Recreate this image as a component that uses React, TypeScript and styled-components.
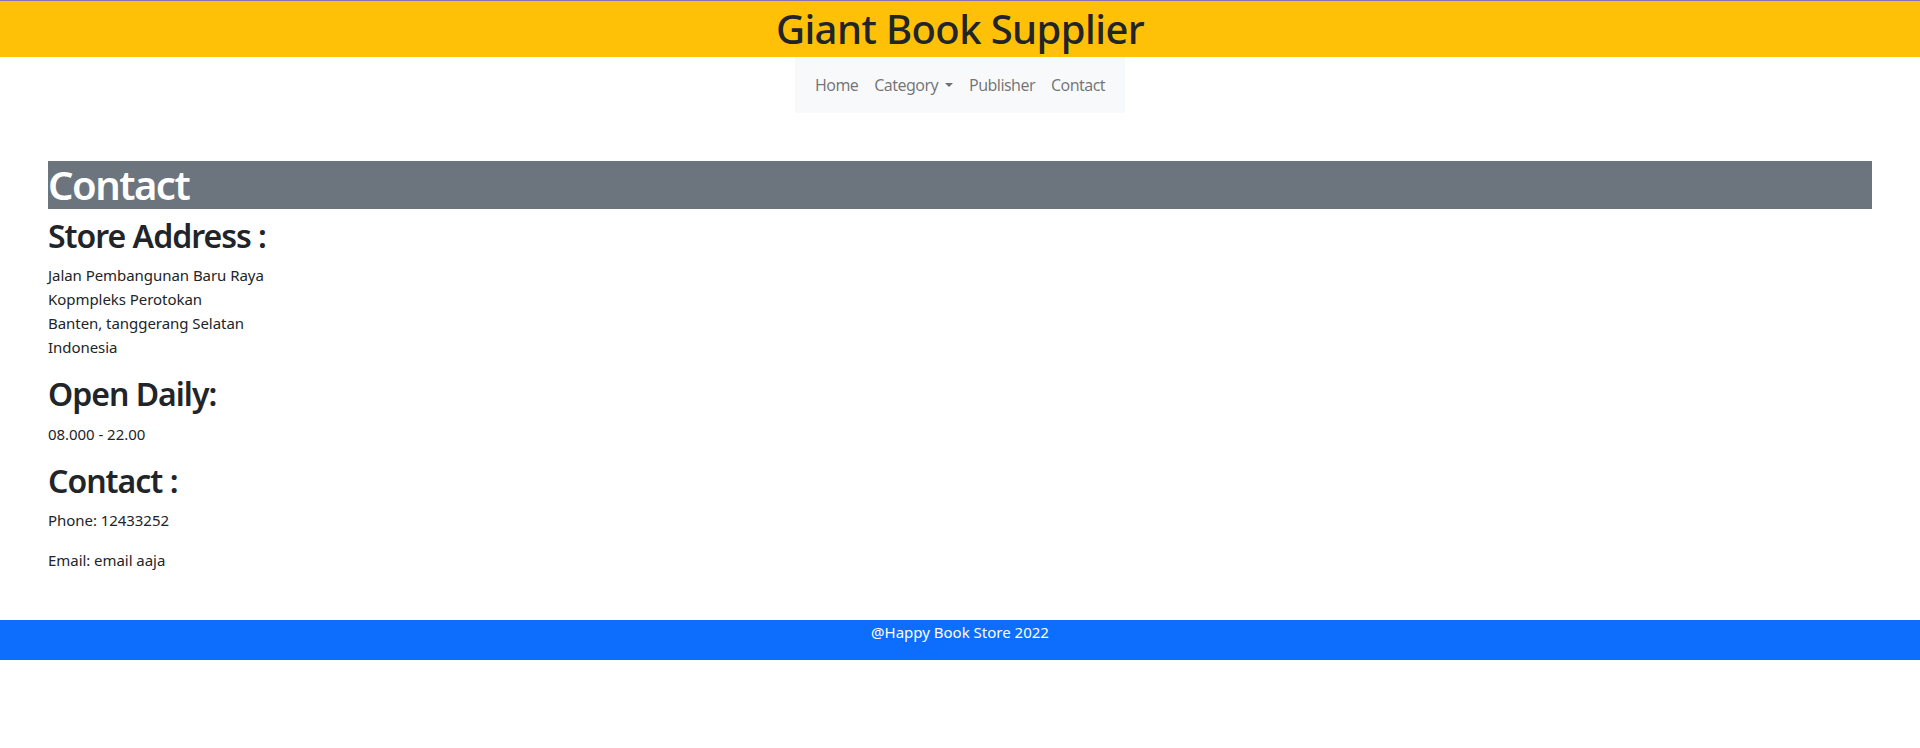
import React from "react";
import styled, { createGlobalStyle } from "styled-components";

const Global = createGlobalStyle`
  *, *::before, *::after { box-sizing: border-box; }
  html, body { margin: 0; padding: 0; background: #fff; }
  body {
    font-family: "Noto Sans", "Open Sans", sans-serif;
    font-size: 16px;
    line-height: 1.5;
    color: #212529;
    border-top: 1px solid #8b71c4;
  }
`;

const Header = styled.h1`
  margin: 0;
  padding: 4px 0;
  background: #ffc107;
  text-align: center;
  font-size: 40px;
  font-weight: 500;
  line-height: 1.2;
  color: #212529;
  letter-spacing: -0.6px;
`;

const NavWrap = styled.div`
  display: flex;
  justify-content: center;
`;

const Nav = styled.nav`
  display: flex;
  align-items: center;
  background: #f8f9fa;
  padding: 8px 12px;
`;

const NavLink = styled.a`
  display: flex;
  align-items: center;
  padding: 8px;
  color: rgba(0, 0, 0, 0.55);
  text-decoration: none;
  font-size: 16px;
  line-height: 24px;
  letter-spacing: -0.55px;
  cursor: pointer;
`;

const Caret = styled.span`
  display: inline-block;
  margin-left: 7px;
  width: 0;
  height: 0;
  border-top: 4.8px solid rgba(0, 0, 0, 0.55);
  border-left: 4.8px solid transparent;
  border-right: 4.8px solid transparent;
`;

const Main = styled.main`
  margin: 48px;
`;

const Banner = styled.h1`
  margin: 0 0 8px;
  background: #6c757d;
  color: #fff;
  font-size: 40px;
  font-weight: 600;
  line-height: 1.2;
  letter-spacing: -1.5px;
`;

const SectionTitle = styled.h2`
  margin: 0 0 8px;
  font-size: 32px;
  font-weight: 600;
  line-height: 1.2;
  letter-spacing: -1px;
`;

const Text = styled.p`
  margin: 0 0 16px;
  font-size: 15px;
  line-height: 24px;
  letter-spacing: -0.05px;
`;

const Footer = styled.footer`
  background: #0d6efd;
  color: #fff;
  text-align: center;
`;

const FooterText = styled.p`
  margin: 0;
  padding-bottom: 16px;
  font-size: 15px;
  line-height: 24px;
  letter-spacing: 0;
`;

export default function App() {
  return (
    <>
      <Global />
      <Header>Giant Book Supplier</Header>
      <NavWrap>
        <Nav>
          <NavLink>Home</NavLink>
          <NavLink>
            Category
            <Caret />
          </NavLink>
          <NavLink>Publisher</NavLink>
          <NavLink>Contact</NavLink>
        </Nav>
      </NavWrap>
      <Main>
        <Banner>Contact</Banner>
        <SectionTitle>Store Address :</SectionTitle>
        <Text>
          Jalan Pembangunan Baru Raya
          <br />
          Kopmpleks Perotokan
          <br />
          Banten, tanggerang Selatan
          <br />
          Indonesia
        </Text>
        <SectionTitle>Open Daily:</SectionTitle>
        <Text>08.000 - 22.00</Text>
        <SectionTitle>Contact :</SectionTitle>
        <Text>Phone: 12433252</Text>
        <Text>Email: email aaja</Text>
      </Main>
      <Footer>
        <FooterText>@Happy Book Store 2022</FooterText>
      </Footer>
    </>
  );
}
